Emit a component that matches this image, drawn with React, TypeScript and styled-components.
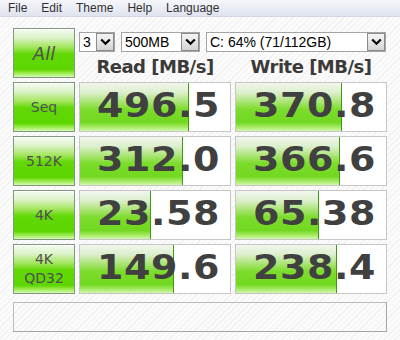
import React from "react";
import styled, { createGlobalStyle } from "styled-components";

const GlobalStyle = createGlobalStyle`
  html, body {
    margin: 0;
    padding: 0;
  }
  body {
    width: 400px;
    height: 340px;
    overflow: hidden;
    background-color: #fbfbfb;
    background-image: repeating-linear-gradient(
      135deg,
      #fbfbfb 0px,
      #fbfbfb 3px,
      #f1f1f1 3px,
      #f1f1f1 4px
    );
    font-family: "DejaVu Sans", sans-serif;
  }
`;

const Window = styled.div`
  width: 400px;
  height: 340px;
  display: flex;
  flex-direction: column;
`;

const MenuBar = styled.div`
  height: 17px;
  display: flex;
  align-items: center;
  padding-left: 1px;
  background: linear-gradient(to bottom, #f6f7fb 0%, #e9ebf4 60%, #dfe3ee 100%);
  border-bottom: 1px solid #d2d6e0;
  box-sizing: border-box;
`;

const MenuItem = styled.span`
  padding: 0 7px;
  font-family: "Liberation Sans", Arial, sans-serif;
  font-size: 12px;
  color: #303030;
  line-height: 16px;
`;

const Main = styled.div`
  padding: 11px 13px 0 13px;
  display: grid;
  grid-template-columns: 62px 152px 152px;
  grid-auto-rows: 50px;
  column-gap: 4px;
  row-gap: 4px;
`;

const GreenButton = styled.div<{ $italic?: boolean; $size?: number }>`
  box-sizing: border-box;
  border: 1px solid #7f987f;
  background: linear-gradient(
    to bottom,
    #f6fbf2 0%,
    #dcf2c8 18%,
    #a2e65c 38%,
    #62d806 52%,
    #5cd600 84%,
    #9cec50 92%,
    #d4fab0 100%
  );
  box-shadow: inset 0 1px 0 #ffffff;
  display: flex;
  flex-direction: column;
  align-items: center;
  justify-content: center;
  font-family: "DejaVu Sans", sans-serif;
  font-size: ${(p) => p.$size ?? 14}px;
  font-style: ${(p) => (p.$italic ? "italic" : "normal")};
  color: #505050;
  line-height: 19px;
  text-align: center;
`;

const TopControls = styled.div`
  grid-column: 2 / 4;
  display: flex;
  flex-direction: column;
`;

const ComboRow = styled.div`
  margin-top: 4px;
  height: 20px;
  display: flex;
  gap: 6px;
`;

const Combo = styled.div<{ $w: number }>`
  box-sizing: border-box;
  width: ${(p) => p.$w}px;
  height: 20px;
  border: 1px solid #a4a4a4;
  background: #ffffff;
  display: flex;
  align-items: center;
  justify-content: space-between;
`;

const ComboText = styled.span`
  padding-left: 3px;
  font-family: "Liberation Sans", Arial, sans-serif;
  font-size: 14px;
  color: #000000;
  white-space: nowrap;
`;

const DropButton = styled.div`
  box-sizing: border-box;
  width: 18px;
  height: 18px;
  border: 1px solid #8c8c8c;
  background: linear-gradient(to bottom, #f4f4f4 0%, #e6e6e6 50%, #d4d4d4 100%);
  display: flex;
  align-items: center;
  justify-content: center;
`;

const Headers = styled.div`
  flex: 1;
  display: grid;
  grid-template-columns: 152px 152px;
  column-gap: 4px;
  align-items: center;
  padding-top: 2px;
`;

const Header = styled.div`
  text-align: center;
  font-family: "DejaVu Sans", sans-serif;
  font-weight: bold;
  font-size: 18px;
  letter-spacing: -0.5px;
  color: #3c3a38;
`;

const Cell = styled.div`
  position: relative;
  box-sizing: border-box;
  border: 1px solid #c6c6c6;
  background: #ffffff;
  overflow: hidden;
`;

const Bar = styled.div`
  position: absolute;
  left: 0;
  top: 0;
  bottom: 0;
  box-sizing: border-box;
  border-right: 1px solid #3f9a12;
  background: linear-gradient(
    to bottom,
    #f2f6ef 0%,
    #dcefcc 20%,
    #a8e470 40%,
    #7cdc2c 55%,
    #72d820 82%,
    #a6ea66 92%,
    #d2f8ac 100%
  );
`;

const Value = styled.div`
  position: relative;
  height: 100%;
  display: flex;
  align-items: center;
  justify-content: flex-end;
  padding-right: 10px;
  padding-bottom: 3px;
  box-sizing: border-box;
`;

const Digits = styled.span`
  display: inline-block;
  transform: scaleX(1.15);
  transform-origin: right center;
  font-family: "DejaVu Sans", sans-serif;
  font-weight: bold;
  font-size: 33px;
  letter-spacing: 0.5px;
  line-height: 1;
  color: #404040;
`;

const CommentBox = styled.div`
  margin: 8px 13px 0 13px;
  height: 30px;
  box-sizing: border-box;
  border: 1px solid #bcbcbc;
  border-bottom-color: #a6a6a6;
  border-right-color: #a6a6a6;
`;

const Chevron = () => (
  <svg width="11" height="8" viewBox="0 0 11 8">
    <path d="M1.2 1.5 L5.5 5.8 L9.8 1.5" fill="none" stroke="#000" strokeWidth="2.2" />
  </svg>
);

type Row = { label: React.ReactNode; read: string; write: string; rw: number; ww: number };

const rows: Row[] = [
  { label: "Seq", read: "496.5", write: "370.8", rw: 109, ww: 106 },
  { label: "512K", read: "312.0", write: "366.6", rw: 103, ww: 104 },
  { label: "4K", read: "23.58", write: "65.38", rw: 71, ww: 83 },
  {
    label: (
      <>
        <span>4K</span>
        <span>QD32</span>
      </>
    ),
    read: "149.6",
    write: "238.4",
    rw: 94,
    ww: 101,
  },
];

export default function App() {
  return (
    <>
      <GlobalStyle />
      <Window>
        <MenuBar>
          <MenuItem>File</MenuItem>
          <MenuItem>Edit</MenuItem>
          <MenuItem>Theme</MenuItem>
          <MenuItem>Help</MenuItem>
          <MenuItem>Language</MenuItem>
        </MenuBar>
        <Main>
          <GreenButton $italic $size={18}>All</GreenButton>
          <TopControls>
            <ComboRow>
              <Combo $w={36}>
                <ComboText>3</ComboText>
                <DropButton><Chevron /></DropButton>
              </Combo>
              <Combo $w={79}>
                <ComboText>500MB</ComboText>
                <DropButton><Chevron /></DropButton>
              </Combo>
              <Combo $w={180}>
                <ComboText>C: 64% (71/112GB)</ComboText>
                <DropButton><Chevron /></DropButton>
              </Combo>
            </ComboRow>
            <Headers>
              <Header>Read [MB/s]</Header>
              <Header>Write [MB/s]</Header>
            </Headers>
          </TopControls>
          {rows.map((r, i) => (
            <React.Fragment key={i}>
              <GreenButton>{r.label}</GreenButton>
              <Cell>
                <Bar style={{ width: r.rw }} />
                <Value><Digits>{r.read}</Digits></Value>
              </Cell>
              <Cell>
                <Bar style={{ width: r.ww }} />
                <Value><Digits>{r.write}</Digits></Value>
              </Cell>
            </React.Fragment>
          ))}
        </Main>
        <CommentBox />
      </Window>
    </>
  );
}
